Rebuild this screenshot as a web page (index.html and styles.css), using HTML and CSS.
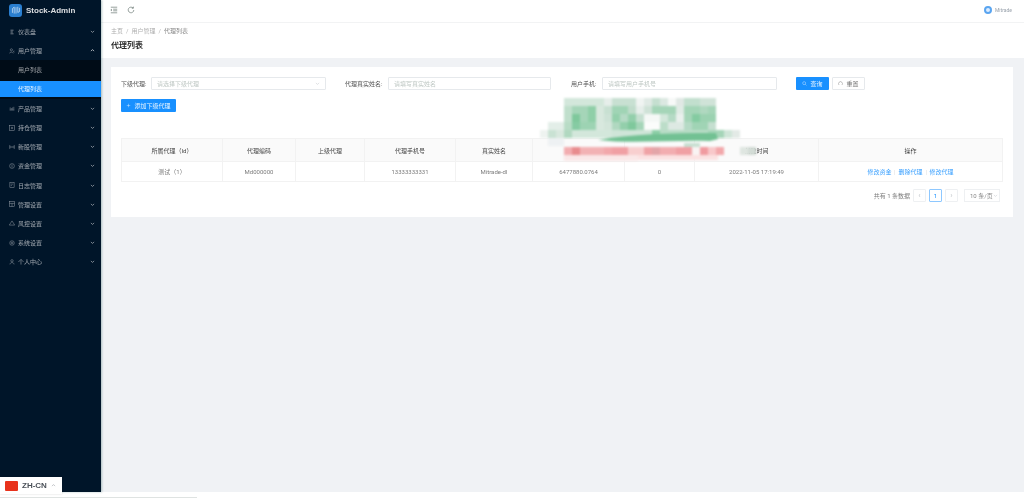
FILE: index.html
```html
<!DOCTYPE html>
<html lang="zh-CN">

<head>
    <meta charset="UTF-8">
    <title>Stock-Admin</title>
    <link rel="stylesheet" href="styles.css">
</head>

<body>
    <div class="layout">
        <aside class="sidebar">
            <div class="logo">
                <span class="logo-mark">
                    <svg viewBox="0 0 14 14" width="10" height="10" fill="none" stroke="#fff" stroke-width="1.3">
                        <path d="M2 11V5l2.5-2v9M7 12V3M9.5 2.5v8l2.5-1.5V4"/>
                    </svg>
                </span>
                <span class="logo-text">Stock-Admin</span>
            </div>
            <ul class="menu">
                <li class="menu-item">
                    <svg class="menu-icon" viewBox="0 0 10 10"><path d="M2 2h6M2 5h4M2 8h6M5 1v8"/></svg>
                    <span>仪表盘</span><svg class="caret" viewBox="0 0 8 8"><path d="M1.5 3L4 5.5 6.5 3"/></svg>
                </li>
                <li class="menu-item">
                    <svg class="menu-icon" viewBox="0 0 10 10"><circle cx="4" cy="3" r="1.8"/><path d="M1 9c0-3 5-3 6 0M7 5l2 2M9 5L7 7"/></svg>
                    <span>用户管理</span><svg class="caret caret-open" viewBox="0 0 8 8"><path d="M1.5 5L4 2.5 6.5 5"/></svg>
                </li>
                <li class="sub-wrap">
                    <div class="sub-item">用户列表</div>
                    <div class="sub-item active">代理列表</div>
                </li>
                <li class="menu-item">
                    <svg class="menu-icon" viewBox="0 0 10 10"><path d="M1 8.500h8M2 8V4M4 8V5M6 8V4M8 8V3" /></svg>
                    <span>产品管理</span><svg class="caret" viewBox="0 0 8 8"><path d="M1.5 3L4 5.500 6.5 3"/></svg>
                </li>
                <li class="menu-item">
                    <svg class="menu-icon" viewBox="0 0 10 10"><rect x="1" y="1" width="8" height="8"/><path d="M4 4h2v2H4z"/></svg>
                    <span>持仓管理</span><svg class="caret" viewBox="0 0 8 8"><path d="M1.5 3L4 5.500 6.5 3"/></svg>
                </li>
                <li class="menu-item">
                    <svg class="menu-icon" viewBox="0 0 10 10"><path d="M1 2.500l3 2.500-3 2.500zM9 2.500L6 5l3 2.500zM4 5h2"/></svg>
                    <span>新股管理</span><svg class="caret" viewBox="0 0 8 8"><path d="M1.5 3L4 5.500 6.500 3"/></svg>
                </li>
                <li class="menu-item">
                    <svg class="menu-icon" viewBox="0 0 10 10"><circle cx="5" cy="5" r="4"/><path d="M5 2.500v5"/></svg>
                    <span>资金管理</span><svg class="caret" viewBox="0 0 8 8"><path d="M1.5 3L4 5.500 6.500 3"/></svg>
                </li>
                <li class="menu-item">
                    <svg class="menu-icon" viewBox="0 0 10 10"><rect x="1.500" y="1" width="7" height="8"/><path d="M3 3.500h4M3 6h2"/></svg>
                    <span>日志管理</span><svg class="caret" viewBox="0 0 8 8"><path d="M1.5 3L4 5.500 6.500 3"/></svg>
                </li>
                <li class="menu-item">
                    <svg class="menu-icon" viewBox="0 0 10 10"><rect x="1" y="1" width="8" height="8"/><path d="M1 4h8M5 4v5"/></svg>
                    <span>管理设置</span><svg class="caret" viewBox="0 0 8 8"><path d="M1.5 3L4 5.500 6.500 3"/></svg>
                </li>
                <li class="menu-item">
                    <svg class="menu-icon" viewBox="0 0 10 10"><path d="M5 1.500L9.500 8.500H.5z"/></svg>
                    <span>风控设置</span><svg class="caret" viewBox="0 0 8 8"><path d="M1.5 3L4 5.500 6.500 3"/></svg>
                </li>
                <li class="menu-item">
                    <svg class="menu-icon" viewBox="0 0 10 10"><circle cx="5" cy="5" r="3.800"/><circle cx="5" cy="5" r="1.500"/></svg>
                    <span>系统设置</span><svg class="caret" viewBox="0 0 8 8"><path d="M1.5 3L4 5.500 6.500 3"/></svg>
                </li>
                <li class="menu-item">
                    <svg class="menu-icon" viewBox="0 0 10 10"><circle cx="5" cy="3" r="2"/><path d="M1.500 9c.5-4 6.500-4 7 0"/></svg>
                    <span>个人中心</span><svg class="caret" viewBox="0 0 8 8"><path d="M1.5 3L4 5.500 6.500 3"/></svg>
                </li>
            </ul>
        </aside>

        <div class="main">
            <header class="topbar">
                <div class="topbar-tools">
                    <svg class="tool" viewBox="0 0 10 10"><path d="M1 1.500h8M4 4h5M4 6h5M1 8.500h8M2.500 3.800L1 5l1.500 1.200"/></svg>
                    <svg class="tool" viewBox="0 0 10 10"><path d="M8.500 5a3.500 3.500 0 1 1-1-2.500M8 .8v2H6"/></svg>
                </div>
                <div class="user">
                    <span class="avatar"></span>
                    <span>Mitrade</span>
                </div>
            </header>

            <div class="page-head">
                <div class="breadcrumb">
                    <span>主页</span><i>/</i><span>用户管理</span><i>/</i><span class="current">代理列表</span>
                </div>
                <h1>代理列表</h1>
            </div>

            <section class="card">
                <form class="filters">
                    <label class="label-a">下级代理:</label>
                    <div class="field field-select">
                        <span>请选择下级代理</span>
                        <svg class="field-caret" viewBox="0 0 8 8"><path d="M1.5 3L4 5.500 6.500 3"/></svg>
                    </div>
                    <label class="label-b">代理真实姓名:</label>
                    <div class="field field-b"><span>请填写真实姓名</span></div>
                    <label class="label-c">用户手机:</label>
                    <div class="field field-c"><span>请填写用户手机号</span></div>
                    <button type="button" class="btn btn-primary btn-search">
                        <svg viewBox="0 0 10 10"><circle cx="4.300" cy="4.300" r="3"/><path d="M6.500 6.500L9 9"/></svg>查询
                    </button>
                    <button type="button" class="btn btn-reset">
                        <svg viewBox="0 0 10 10"><path d="M2 8a4 4 0 1 1 6 0"/></svg>重置
                    </button>
                </form>

                <button type="button" class="btn btn-primary btn-add">
                    <svg viewBox="0 0 10 10"><path d="M5 1.500v7M1.500 5h7"/></svg>添加下级代理
                </button>

                <table class="data-table">
                    <colgroup>
                        <col class="c1"><col class="c2"><col class="c3"><col class="c4"><col class="c5">
                        <col class="c6"><col class="c7"><col class="c8"><col class="c9">
                    </colgroup>
                    <thead>
                        <tr>
                            <th>所属代理（Id）</th>
                            <th>代理编码</th>
                            <th>上级代理</th>
                            <th>代理手机号</th>
                            <th>真实姓名</th>
                            <th></th>
                            <th></th>
                            <th>创建时间</th>
                            <th>操作</th>
                        </tr>
                    </thead>
                    <tbody>
                        <tr>
                            <td>测试（1）</td>
                            <td>Md000000</td>
                            <td></td>
                            <td>13333333331</td>
                            <td>Mitrade-dl</td>
                            <td>6477880.0764</td>
                            <td>0</td>
                            <td>2022-11-05 17:19:49</td>
                            <td class="actions">
                                <a>修改资金</a><i></i><a>删除代理</a><i></i><a>修改代理</a>
                            </td>
                        </tr>
                    </tbody>
                </table>

                <div class="pager">
                    <span class="pager-total">共有 1 条数据</span>
                    <span class="page-btn muted">‹</span>
                    <span class="page-btn current">1</span>
                    <span class="page-btn muted">›</span>
                    <span class="page-size">10 条/页<svg class="field-caret" viewBox="0 0 8 8"><path d="M1.5 3L4 5.500 6.500 3"/></svg></span>
                </div>

                <svg class="mosaic" viewBox="0 0 220 72" width="220" height="72">
                    <g>
                        <rect x="24" y="0" width="40" height="8" fill="#d3e7db"/><rect x="64" y="0" width="8" height="8" fill="#e6eeea"/><rect x="72" y="0" width="24" height="8" fill="#c8e0d2"/><rect x="96" y="0" width="8" height="8" fill="#f0f4f2"/><rect x="104" y="0" width="8" height="8" fill="#e0eae5"/><rect x="112" y="0" width="8" height="8" fill="#c5dfd0"/><rect x="120" y="0" width="8" height="8" fill="#dbe8e1"/><rect x="128" y="0" width="8" height="8" fill="#f7f9f8"/><rect x="136" y="0" width="8" height="8" fill="#e0e8e4"/><rect x="144" y="0" width="16" height="8" fill="#c2dfce"/><rect x="160" y="0" width="16" height="8" fill="#d0e3d8"/>

                        <rect x="24" y="8" width="8" height="8" fill="#c0dfcc"/><rect x="32" y="8" width="16" height="8" fill="#a5d5b8"/><rect x="48" y="8" width="8" height="8" fill="#8fcfa8"/><rect x="56" y="8" width="8" height="8" fill="#d8e8de"/><rect x="64" y="8" width="8" height="8" fill="#c8e0d2"/><rect x="72" y="8" width="16" height="8" fill="#a0d4b5"/><rect x="88" y="8" width="8" height="8" fill="#c0dccb"/><rect x="96" y="8" width="8" height="8" fill="#e6eeea"/><rect x="104" y="8" width="8" height="8" fill="#cfe2d7"/><rect x="112" y="8" width="24" height="8" fill="#a5d5b8"/><rect x="136" y="8" width="8" height="8" fill="#e0ebe5"/><rect x="144" y="8" width="16" height="8" fill="#a4d5b7"/><rect x="160" y="8" width="8" height="8" fill="#b0d8c0"/><rect x="168" y="8" width="8" height="8" fill="#a5d5b8"/>

                        <rect x="24" y="16" width="8" height="8" fill="#c0dfcc"/><rect x="32" y="16" width="8" height="8" fill="#7fc89c"/><rect x="40" y="16" width="8" height="8" fill="#a5d5b8"/><rect x="48" y="16" width="8" height="8" fill="#8fcfa8"/><rect x="56" y="16" width="8" height="8" fill="#d8e8de"/><rect x="64" y="16" width="8" height="8" fill="#cde2d6"/><rect x="72" y="16" width="8" height="8" fill="#94d0ac"/><rect x="80" y="16" width="8" height="8" fill="#b5dac5"/><rect x="88" y="16" width="8" height="8" fill="#93cfab"/><rect x="96" y="16" width="8" height="8" fill="#c5dfd0"/><rect x="104" y="16" width="16" height="8" fill="#f5f8f6"/><rect x="120" y="16" width="8" height="8" fill="#d3e7db"/><rect x="128" y="16" width="8" height="8" fill="#b5dac5"/><rect x="136" y="16" width="8" height="8" fill="#eaf0ed"/><rect x="144" y="16" width="8" height="8" fill="#a5d5b8"/><rect x="152" y="16" width="8" height="8" fill="#84cba1"/><rect x="160" y="16" width="16" height="8" fill="#9bd2b1"/>

                        <rect x="8" y="24" width="16" height="8" fill="#e3eee8"/><rect x="24" y="24" width="8" height="8" fill="#b8dcc6"/><rect x="32" y="24" width="8" height="8" fill="#86cba3"/><rect x="40" y="24" width="16" height="8" fill="#9dd3b3"/><rect x="56" y="24" width="8" height="8" fill="#d8e8de"/><rect x="64" y="24" width="8" height="8" fill="#d3e5da"/><rect x="72" y="24" width="8" height="8" fill="#b0d8c0"/><rect x="80" y="24" width="8" height="8" fill="#93cfab"/><rect x="88" y="24" width="8" height="8" fill="#7fc89c"/><rect x="96" y="24" width="8" height="8" fill="#a5d5b8"/><rect x="104" y="24" width="16" height="8" fill="#fbfcfb"/><rect x="120" y="24" width="8" height="8" fill="#bcddc9"/><rect x="128" y="24" width="16" height="8" fill="#dde9e3"/><rect x="144" y="24" width="8" height="8" fill="#b5dac5"/><rect x="152" y="24" width="16" height="8" fill="#a0d4b5"/><rect x="168" y="24" width="8" height="8" fill="#c5dfd0"/>

                        <rect x="0" y="32" width="8" height="8" fill="#eef3f0"/><rect x="8" y="32" width="8" height="8" fill="#c9e2d3"/><rect x="16" y="32" width="8" height="8" fill="#d8e8de"/><rect x="24" y="32" width="8" height="8" fill="#b0d8c0"/><rect x="32" y="32" width="40" height="8" fill="#d3e7db"/><rect x="72" y="32" width="40" height="8" fill="#cfe5d8"/><rect x="112" y="32" width="8" height="8" fill="#8ecfa8"/><rect x="120" y="32" width="48" height="8" fill="#b8dcc6"/><rect x="168" y="32" width="16" height="8" fill="#a5d5b8"/><rect x="184" y="32" width="8" height="8" fill="#cfe5d8"/><rect x="192" y="32" width="8" height="8" fill="#e3eae6"/>
                        <path d="M58 42C90 36 130 35 176 35l2 6-8 2c-40-1-80 3-112-1z" fill="#72c193"/>

                        <rect x="8" y="40" width="16" height="8" fill="#eef1f3"/><rect x="144" y="45" width="16" height="9" fill="#c8e0d2"/>

                        <rect x="24" y="49" width="8" height="8" fill="#f2adb0"/><rect x="32" y="49" width="8" height="8" fill="#e88c8e"/><rect x="40" y="49" width="24" height="8" fill="#f2b2b4"/><rect x="64" y="49" width="8" height="8" fill="#f2a8ab"/><rect x="72" y="49" width="16" height="8" fill="#f0a0a4"/><rect x="88" y="49" width="16" height="8" fill="#f8cfcf"/><rect x="104" y="49" width="8" height="8" fill="#efa3a6"/><rect x="112" y="49" width="8" height="8" fill="#e3a5a8"/><rect x="120" y="49" width="16" height="8" fill="#f2adb0"/><rect x="136" y="49" width="16" height="8" fill="#f0a0a4"/><rect x="152" y="49" width="8" height="8" fill="#f9f3f3"/><rect x="160" y="49" width="8" height="8" fill="#f09ba0"/><rect x="168" y="49" width="8" height="8" fill="#f8c8ca"/><rect x="176" y="49" width="8" height="8" fill="#f2a8ab"/>

                        <rect x="24" y="57" width="74" height="6" fill="#fae8e8"/><rect x="98" y="57" width="80" height="5" fill="#fbe2e2"/>
                        <rect x="200" y="49" width="8" height="8" fill="#dfe6e1"/><rect x="208" y="49" width="8" height="8" fill="#d3dcd6"/>
                    </g>
                </svg>
            </section>
        </div>
    </div>

    <div class="bottom-strip"><span class="strip-line"></span></div>

    <div class="lang">
        <span class="flag"></span>
        <span>ZH-CN</span>
        <svg class="lang-caret" viewBox="0 0 8 8"><path d="M1.500 5L4 2.500 6.500 5"/></svg>
    </div>
</body>

</html>
```

FILE: styles.css
```css
* {
    box-sizing: border-box;
}

html,
body {
    margin: 0;
    height: 498px;
    overflow: hidden;
    background-color: #fff;
}

body {
    font-family: Roboto, "Noto Sans CJK SC", sans-serif;
    font-size: 6px;
    color: rgba(0, 0, 0, 0.55);
    position: relative;
    filter: blur(0.45px);
}

svg {
    fill: none;
    stroke: currentColor;
    stroke-width: 0.8;
}

.layout {
    display: flex;
    height: 492px;
    background-color: #f0f2f5;
}

/* sidebar */
.sidebar {
    width: 101px;
    flex-shrink: 0;
    background-color: #001529;
    box-shadow: 1px 0 2px rgba(40, 90, 90, 0.35);
    color: rgba(255, 255, 255, 0.6);
    z-index: 1;
}

.logo {
    display: flex;
    align-items: center;
    gap: 4px;
    height: 22px;
    padding: 0 0 2px 9px;
    color: #fff;
}

.logo-mark {
    display: flex;
    align-items: center;
    justify-content: center;
    width: 13px;
    height: 13px;
    border-radius: 3px;
    background-color: #2a7fd0;
}

.logo-text {
    font-family: "Liberation Sans", sans-serif;
    font-size: 8px;
    font-weight: 700;
    color: rgba(255, 255, 255, 0.85);
}

.menu {
    list-style: none;
    margin: 0;
    padding: 0;
}

.menu-item {
    display: flex;
    align-items: center;
    height: 19.2px;
    padding: 0 6px 0 9px;
}

.menu-item > span {
    flex: 1;
    margin-left: 3px;
}

.menu-icon {
    width: 6px;
    height: 6px;
}

.caret {
    width: 5px;
    height: 5px;
    stroke-width: 1.3;
}

.caret-open {
    color: rgba(255, 255, 255, 0.8);
}

.sub-wrap {
    background-color: #000c17;
    height: 38.4px;
}

.sub-item {
    height: 19.2px;
    line-height: 19.2px;
    padding-left: 18px;
}

.sub-item.active {
    height: 16px;
    line-height: 16px;
    margin-top: 1.6px;
    background-color: #1890ff;
    color: rgba(255, 255, 255, 0.9);
}

/* main */
.main {
    flex: 1;
    min-width: 0;
    position: relative;
}

.topbar {
    display: flex;
    justify-content: space-between;
    align-items: center;
    height: 23px;
    padding: 0 12px 2px 9px;
    background-color: #fff;
    border-bottom: 1px solid #f2f3f4;
}

.topbar-tools {
    display: flex;
    gap: 9px;
    color: #5c6b66;
}

.tool {
    width: 8px;
    height: 8px;
}

.user {
    display: flex;
    align-items: center;
    gap: 3px;
    font-size: 5px;
    color: #9aa3ad;
}

.avatar {
    width: 8px;
    height: 8px;
    border-radius: 50%;
    border: 2px solid #5aa5f0;
    background-color: #dcecff;
}

.page-head {
    height: 35px;
    padding: 3px 10px 0;
    background-color: #fff;
}

.breadcrumb {
    color: rgba(0, 0, 0, 0.35);
    line-height: 10px;
}

.breadcrumb i {
    font-style: normal;
    margin: 0 3px;
}

.breadcrumb .current {
    color: rgba(0, 0, 0, 0.5);
}

h1 {
    margin: 4px 0 0;
    font-size: 8px;
    line-height: 12px;
    font-weight: 700;
    color: rgba(0, 0, 0, 0.85);
}

.card {
    position: relative;
    margin: 9px 11px 0 10px;
    height: 150px;
    padding: 10px 10px 0;
    background-color: #fff;
}

.filters {
    display: flex;
    align-items: center;
    height: 13px;
}

.filters label {
    color: rgba(0, 0, 0, 0.7);
    white-space: nowrap;
}

.label-a {
    width: 30px;
}

.label-b {
    margin-left: 19px;
    width: 43px;
}

.label-c {
    margin-left: 20px;
    width: 31px;
}

.field {
    display: flex;
    align-items: center;
    justify-content: space-between;
    height: 13px;
    padding: 0 5px;
    border: 1px solid #e6e9ec;
    border-radius: 1px;
    color: #bfc8c4;
}

.field-select {
    width: 175px;
}

.field-b {
    width: 163px;
}

.field-c {
    width: 175px;
}

.field-caret {
    width: 5px;
    height: 5px;
    flex-shrink: 0;
    color: #c0c4c8;
}

.btn {
    display: inline-flex;
    align-items: center;
    justify-content: center;
    gap: 3px;
    border-radius: 1px;
    padding: 0;
    font: inherit;
    cursor: pointer;
}

.btn svg {
    width: 5px;
    height: 5px;
}

.btn-primary {
    border: none;
    background-color: #1890ff;
    color: rgba(255, 255, 255, 0.9);
}

.btn-search {
    width: 33px;
    height: 13px;
    margin-left: 19px;
}

.btn-reset {
    width: 33px;
    height: 13px;
    margin-left: 3px;
    border: 1px solid #e6e9ec;
    background-color: #fff;
    color: rgba(0, 0, 0, 0.6);
}

.btn-add {
    display: flex;
    width: 55px;
    height: 13px;
    margin-top: 9px;
}

.data-table {
    width: 881px;
    margin-top: 26px;
    table-layout: fixed;
    border-collapse: collapse;
    text-align: center;
    border: 1px solid #f2f2f2;
}

.c1 { width: 101px; }
.c2 { width: 73px; }
.c3 { width: 69px; }
.c4 { width: 91px; }
.c5 { width: 77px; }
.c6 { width: 92px; }
.c7 { width: 70px; }
.c8 { width: 124px; }
.c9 { width: 184px; }

.data-table th,
.data-table td {
    padding: 0;
    border-right: 1px solid #f2f2f2;
    border-bottom: 1px solid #f2f2f2;
    font-weight: 400;
}

.data-table th {
    height: 23px;
    background-color: #fafafa;
    color: rgba(0, 0, 0, 0.75);
}

.data-table td {
    height: 20px;
}

.actions a {
    color: #3aa0ff;
}

.actions i {
    display: inline-block;
    width: 1px;
    height: 5px;
    margin: 0 3px;
    background-color: #eeeeee;
    vertical-align: middle;
}

.pager {
    display: flex;
    justify-content: flex-end;
    align-items: center;
    margin-top: 7px;
    padding-right: 3px;
    height: 13px;
}

.pager-total {
    margin-right: 3px;
}

.page-btn {
    display: flex;
    align-items: center;
    justify-content: center;
    width: 13px;
    height: 13px;
    margin-right: 3px;
    border: 1px solid #eef0f2;
    border-radius: 1px;
}

.page-btn.muted {
    color: #c4c8cc;
    font-size: 8px;
}

.page-btn.current {
    border-color: #8ec8ff;
    color: #1890ff;
}

.page-size {
    display: flex;
    align-items: center;
    justify-content: space-between;
    width: 36px;
    height: 13px;
    margin-left: 3px;
    padding: 0 3px 0 5px;
    border: 1px solid #eef0f2;
    color: rgba(0, 0, 0, 0.5);
    white-space: nowrap;
}

/* pixelated cover drawn over the table */
.mosaic {
    position: absolute;
    left: 429px;
    top: 31px;
    stroke: none;
    filter: blur(1px);
}

.mosaic rect,
.mosaic path {
    stroke: none;
}

.bottom-strip {
    height: 6px;
    background-color: #fff;
}

.strip-line {
    display: block;
    width: 197px;
    height: 1px;
    margin-top: 5px;
    background-color: #dfe3e2;
}

.lang {
    position: absolute;
    left: 0;
    top: 477px;
    display: flex;
    align-items: center;
    gap: 4px;
    width: 62px;
    height: 17px;
    padding-left: 5px;
    background-color: #fff;
    box-shadow: 0 0 2px rgba(0, 0, 0, 0.15);
    font-family: "Liberation Sans", sans-serif;
    font-size: 8px;
    font-weight: 700;
    color: #4a5058;
    z-index: 2;
}

.flag {
    width: 13px;
    height: 10px;
    border-radius: 1px;
    background-color: #e8321c;
}

.lang-caret {
    width: 5px;
    height: 5px;
    color: #8a9096;
}
```
